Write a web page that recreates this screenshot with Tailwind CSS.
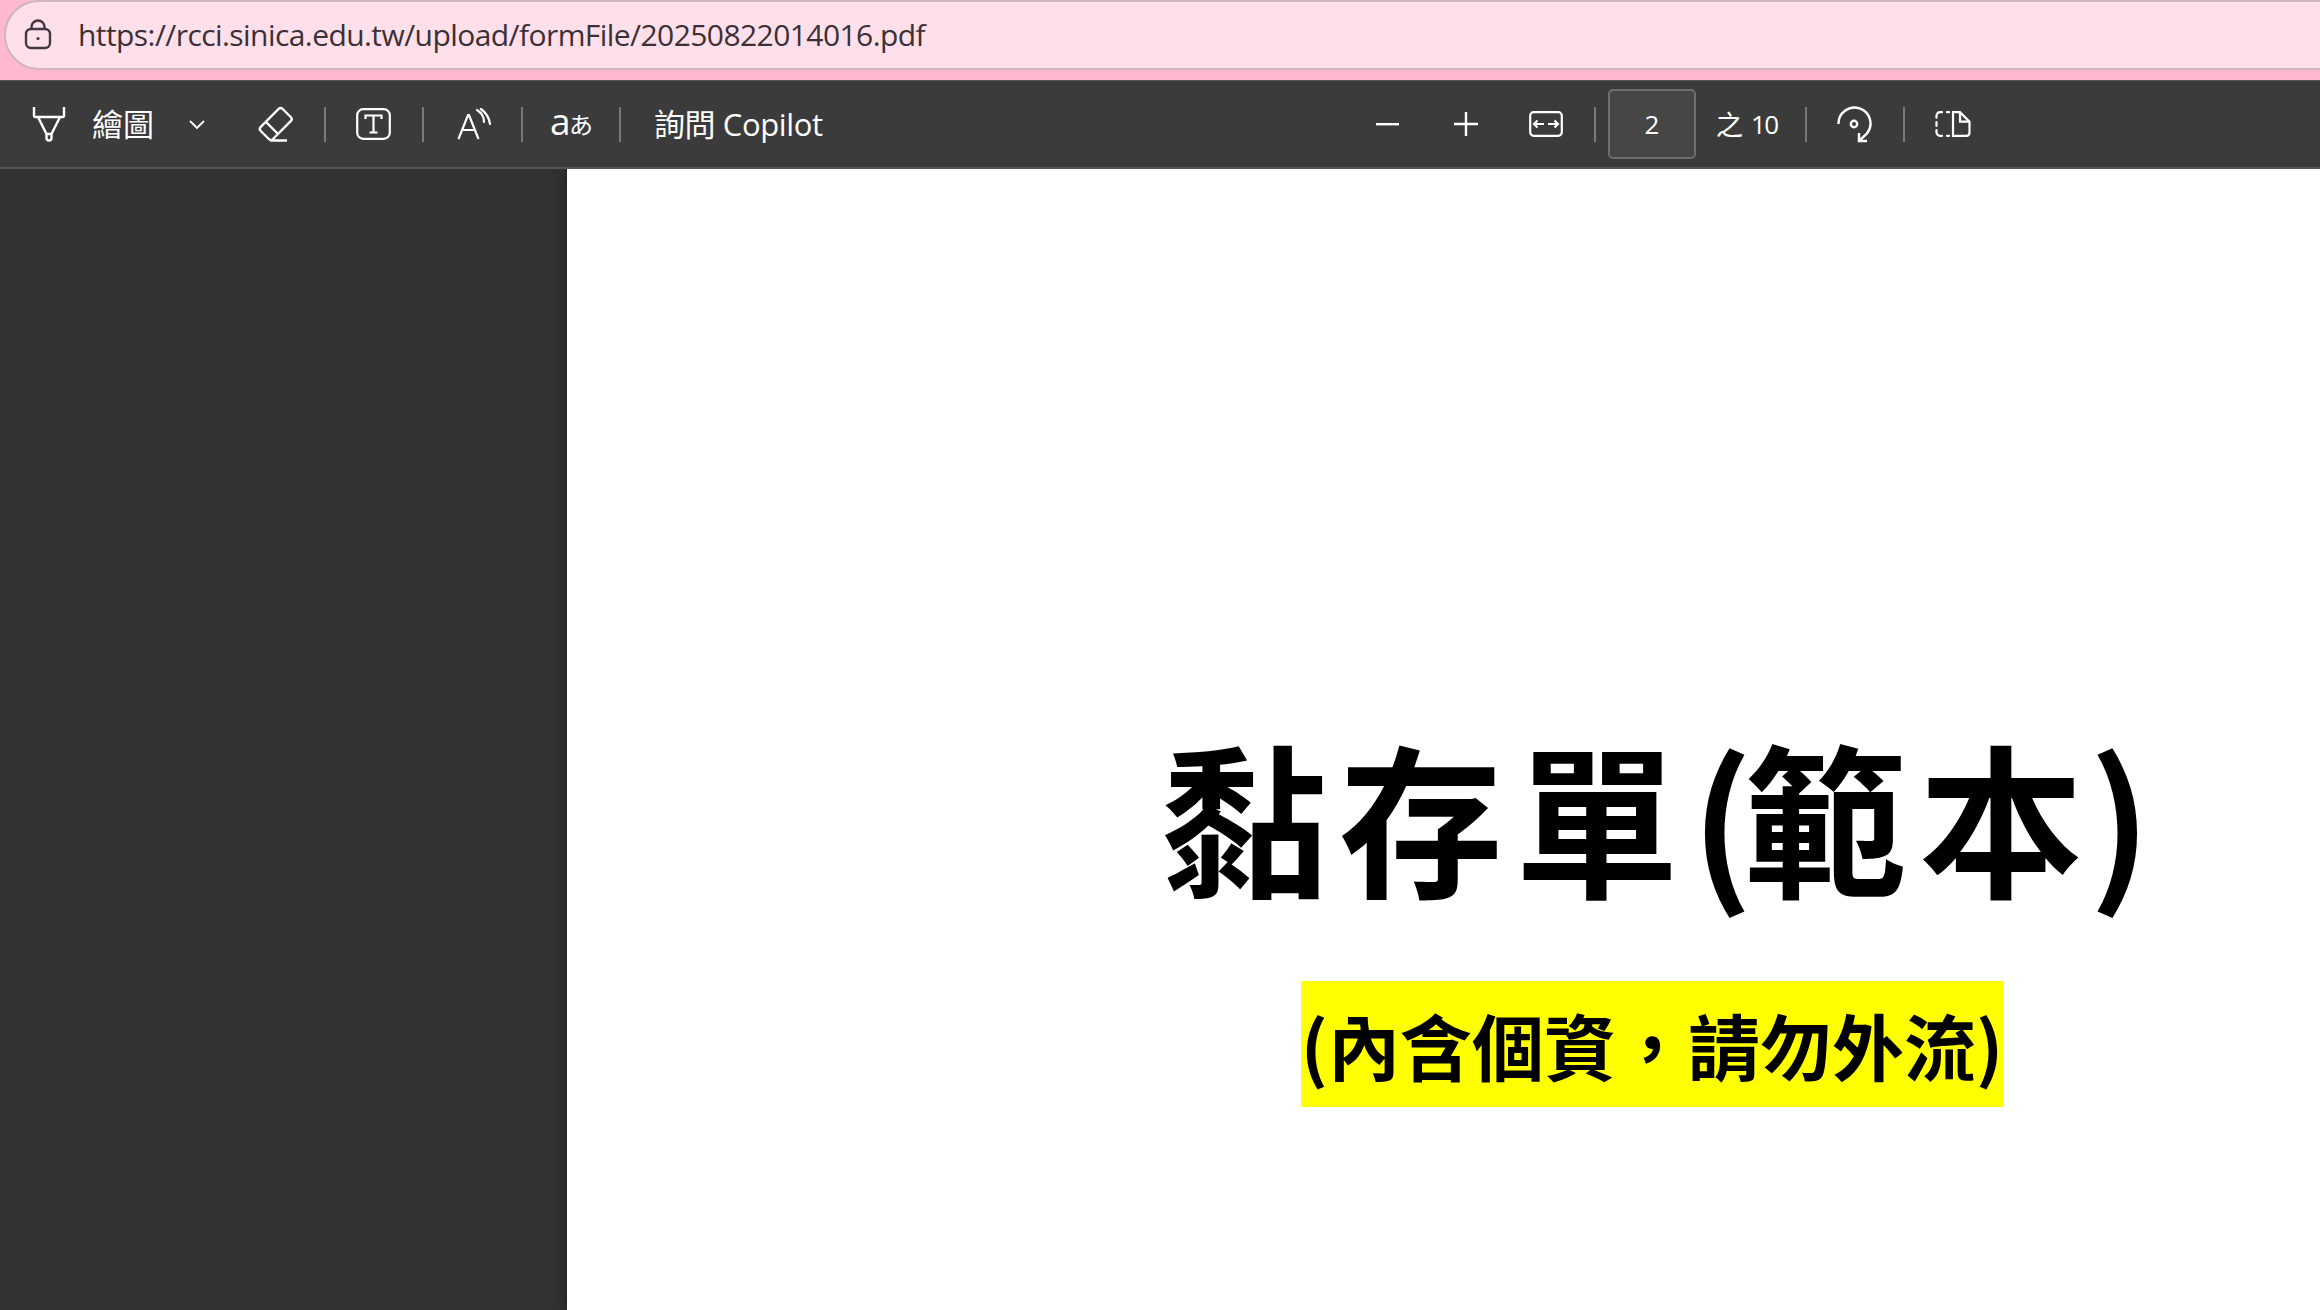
<!DOCTYPE html>
<html lang="zh-Hant">
<head>
<meta charset="utf-8">
<title>PDF</title>
<script src="https://cdn.jsdelivr.net/npm/@tailwindcss/browser@4"></script>
</head>
<body class="w-[2320px] h-[1310px] overflow-hidden bg-[#323232] font-['Open_Sans','Noto_Sans_CJK_TC',sans-serif]">
<div class="flex flex-col h-full">
  <div class="h-[80px] shrink-0 bg-[#feb8d0] pl-[4px] overflow-hidden">
    <div class="flex items-center h-[70px] w-[2500px] rounded-full border-2 border-[#cdb6c0] bg-[#ffe0ea] pl-[17px]">
      <svg width="30" height="32" viewBox="0 0 30 32" fill="none" stroke="#45383e" stroke-width="2.4"><rect x="3" y="10" width="24" height="19" rx="5"/><path d="M8.5 10V8a6.5 6.5 0 0 1 13 0v2"/><circle cx="15" cy="19.5" r="1.6" fill="#45383e" stroke="none"/></svg>
      <span class="ml-[25px] text-[30px] leading-none text-[#3a3035] tracking-[-0.57px]">https://rcci.sinica.edu.tw/upload/formFile/20250822014016.pdf</span>
    </div>
  </div>
  <div class="relative z-10 h-[89px] shrink-0 flex items-center bg-[#3b3b3b] border-t border-[#5a5056] border-b-2 border-b-[#555555] text-white">
    <svg class="ml-[32px] shrink-0" width="34" height="36" viewBox="0 0 34 36" fill="none" stroke="#fff" stroke-width="2.4" stroke-linejoin="round"><path d="M2 1v8.500a1.500 1.500 0 0 0 1.500 1.500h27a1.500 1.500 0 0 0 1.500-1.500V1"/><path d="M6 11l8.500 17h5L28 11"/><path d="M14.500 28v4a2.500 2.500 0 0 0 5 0v-4"/></svg>
    <span class="ml-[26px] w-[62px] shrink-0 text-[31px] leading-none whitespace-nowrap">繪圖</span>
    <svg class="ml-[35px] shrink-0" width="16" height="9" viewBox="0 0 16 9" fill="none" stroke="#fff" stroke-width="1.8"><path d="M1 1l7 7 7-7"/></svg>
    <svg class="ml-[53px] shrink-0" width="36" height="36" viewBox="0 0 36 36" fill="none" stroke="#fff" stroke-width="2.4" stroke-linejoin="round"><path d="M20.500 3a3 3 0 0 1 4.200 0l8 8a3 3 0 0 1 0 4.200L15 33a3 3 0 0 1-4.200 0l-8-8a3 3 0 0 1 0-4.200z"/><path d="M7.500 15.500L20 28M12 34.500h17"/></svg>
    <div class="ml-[30px] w-[2px] h-[35px] shrink-0 bg-[#7a7a7a]"></div>
    <svg class="ml-[30px] shrink-0" width="35" height="32" viewBox="0 0 35 32" fill="none" stroke="#fff" stroke-width="2.2"><rect x="1.200" y="1.200" width="32.600" height="29.600" rx="6"/><path d="M9.500 11V7.500h16V11M17.500 7.500v17M13.500 24.500h8"/></svg>
    <div class="ml-[31px] w-[2px] h-[35px] shrink-0 bg-[#7a7a7a]"></div>
    <svg class="ml-[33px] shrink-0" width="34" height="32" viewBox="0 0 34 32" fill="none" stroke="#fff" stroke-width="2.2"><path d="M1.500 31L11 7h1l9.500 24M5 22h13"/><path d="M20 2c5 3 7 7 7 12M24 1c4 3 8 7 9 15" stroke-linecap="round"/></svg>
    <div class="ml-[30px] w-[2px] h-[35px] shrink-0 bg-[#7a7a7a]"></div>
    <div class="ml-[27px] w-[40px] h-[30px] shrink-0 flex items-center whitespace-nowrap leading-none"><span class="w-[19px] shrink-0 text-[37px] leading-[30px] pb-[6px]">a</span><span class="text-[24px] leading-none font-['Noto_Sans_CJK_JP',sans-serif]">あ</span></div>
    <div class="ml-[29px] w-[2px] h-[35px] shrink-0 bg-[#7a7a7a]"></div>
    <span class="ml-[33px] w-[168px] shrink-0 text-[31px] leading-none tracking-[-0.4px] whitespace-nowrap">詢問 Copilot</span>
    <svg class="ml-[554px] shrink-0" width="23" height="3" viewBox="0 0 23 3"><rect width="23" height="2.400" fill="#fff"/></svg>
    <svg class="ml-[55px] shrink-0" width="24" height="24" viewBox="0 0 24 24" stroke="#fff" stroke-width="2.400"><path d="M0 12h24M12 0v24"/></svg>
    <svg class="ml-[51px] shrink-0" width="34" height="26" viewBox="0 0 34 26" fill="none" stroke="#fff" stroke-width="2.200"><rect x="1.200" y="1.200" width="31.600" height="23.600" rx="3.500"/><path d="M5 13h10M8.500 9.500L5 13l3.500 3.500M19 13h10M25.500 9.500L29 13l-3.500 3.500"/></svg>
    <div class="ml-[31px] w-[2px] h-[35px] shrink-0 bg-[#7a7a7a]"></div>
    <div class="ml-[12px] w-[88px] h-[70px] shrink-0 flex items-center justify-center rounded-[5px] bg-[#464646] border-2 border-[#6e6e6e] text-[26px] leading-none">2</div>
    <span class="ml-[20px] w-[27px] shrink-0 text-[27px] leading-none">之</span>
    <span class="ml-[8px] w-[26px] shrink-0 text-[26px] leading-none tracking-[-1.5px] whitespace-nowrap">10</span>
    <div class="ml-[28px] w-[2px] h-[35px] shrink-0 bg-[#7a7a7a]"></div>
    <svg class="ml-[30px] shrink-0" width="36" height="37" viewBox="0 0 36 37" fill="none" stroke="#fff" stroke-width="2.400"><path d="M1.500 18A16 16 0 1 1 30 27.500L22 35"/><path d="M22 27v8h8"/><circle cx="17" cy="18" r="3.200"/></svg>
    <div class="ml-[30px] w-[2px] h-[35px] shrink-0 bg-[#7a7a7a]"></div>
    <svg class="ml-[30px] shrink-0" width="36" height="26" viewBox="0 0 36 26" fill="none" stroke="#fff" stroke-width="2.200"><path d="M14 1.200h-2M7 1.200H5a3.500 3.500 0 0 0-3.500 3.500v2M1.500 11v4M1.500 19v2.300a3.500 3.500 0 0 0 3.500 3.500h2M12 24.800h2" stroke-linecap="round"/><path d="M18 1.200h7l9.500 9.500v11a3 3 0 0 1-3 3.100H18zM25 1.200v9.500h9.500"/></svg>
  </div>
  <div class="flex flex-1 min-h-0">
    <div class="w-[567px] shrink-0 bg-[#323232]"></div>
    <main class="flex-1 min-w-0 bg-white overflow-hidden shadow-[0_0_14px_rgba(0,0,0,0.55)]">
      <div class="w-[2170px] flex flex-col items-center pt-[538px]">
        <h1 class="ml-[10px] text-[164px] leading-[1.3] font-bold text-black tracking-[12px] whitespace-nowrap font-['Noto_Sans_CJK_TC','Noto_Sans',sans-serif]">黏存單<span class="tracking-[-10px]">(</span>範本<span class="-ml-[6px] tracking-[0px]">)</span></h1>
        <p class="mt-[61px] h-[126px] flex items-center bg-[#ffff00] text-[72px] leading-none font-bold text-black whitespace-nowrap font-['Noto_Sans_CJK_TC','Noto_Sans',sans-serif]">(內含個資，請勿外流)</p>
      </div>
    </main>
  </div>
</div>
</body>
</html>
